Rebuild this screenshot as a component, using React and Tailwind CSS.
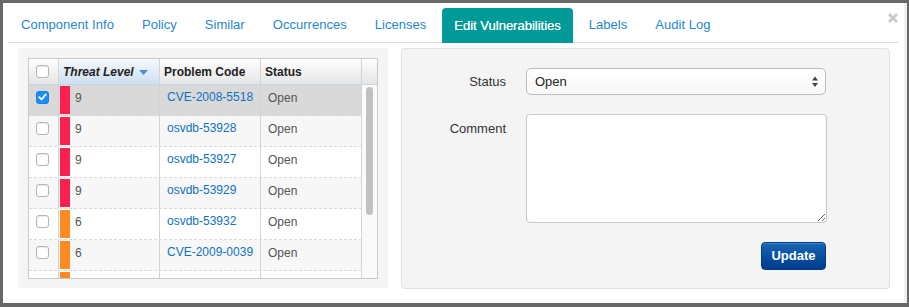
import React from "react";

const FONT = { fontFamily: '"Liberation Sans", Arial, Helvetica, sans-serif' };

const tabs = [
  "Component Info",
  "Policy",
  "Similar",
  "Occurrences",
  "Licenses",
  "Edit Vulnerabilities",
  "Labels",
  "Audit Log",
];

const rows = [
  { level: 9, code: "CVE-2008-5518", color: "bg-[#fd1f50]", selected: true },
  { level: 9, code: "osvdb-53928", color: "bg-[#fd1f50]" },
  { level: 9, code: "osvdb-53927", color: "bg-[#fd1f50]" },
  { level: 9, code: "osvdb-53929", color: "bg-[#fd1f50]" },
  { level: 6, code: "osvdb-53932", color: "bg-[#ff8a22]" },
  { level: 6, code: "CVE-2009-0039", color: "bg-[#ff8a22]" },
  { level: null, code: "", color: "bg-[#ff8a22]", hidden: true },
];

function Checkbox({ checked }) {
  if (checked) {
    return (
      <div className="w-[13px] h-[13px] rounded-[3px] bg-[#1a8ef8] border border-[#1580e6] flex items-center justify-center">
        <svg width="9" height="8" viewBox="0 0 9 8">
          <path d="M1.2 4.2 L3.5 6.4 L7.8 1.4" fill="none" stroke="#fff" strokeWidth="1.7" strokeLinecap="round" strokeLinejoin="round" />
        </svg>
      </div>
    );
  }
  return (
    <div className="w-[13px] h-[13px] rounded-[3px] bg-white border border-[#b4b4b4] shadow-[inset_0_1px_1px_rgba(0,0,0,0.08)]" />
  );
}

export default function App() {
  return (
    <div className="w-[909px] h-[307px] bg-[#686868] flex pt-[3px] pl-[3px] overflow-hidden" style={FONT}>
      <div className="w-[901px] h-[300px] bg-white flex flex-col">
        {/* Tabs */}
        <div className="mt-[5px] ml-[5px] mr-[6px] h-[35px] border-b border-[#dcdcdc] flex">
          <div className="flex pl-[1px] gap-[4px]">
            {tabs.map((t) =>
              t === "Edit Vulnerabilities" ? (
                <div
                  key={t}
                  className="h-[35px] px-[12px] flex items-center bg-[#009b98] rounded-t-[4px] text-white text-[13px] [text-shadow:0_0_0.4px_#fff]"
                >
                  {t}
                </div>
              ) : (
                <div key={t} className="h-[34px] px-[12px] flex items-center text-[#1f86d1] text-[13px] tracking-[0.03px]">
                  {t}
                </div>
              )
            )}
          </div>
          <div className="ml-auto mt-[5px]">
            <svg width="10" height="10" viewBox="0 0 10 10">
              <path d="M1 1 L9 9 M9 1 L1 9" stroke="#c9c9c9" strokeWidth="2.6" />
            </svg>
          </div>
        </div>

        {/* Body */}
        <div className="mt-[5px] pl-[15px] flex gap-[13px] items-start">
          {/* Left panel */}
          <div className="w-[370px] h-[240px] bg-[#f5f5f5] pt-[10px] pl-[10px]">
            <div className="w-[350px] h-[221px] border border-[#c9c9c9] bg-white flex flex-col text-[12px]">
              {/* header */}
              <div className="h-[26px] flex border-b border-[#c6d3e2] shrink-0">
                <div className="w-[30px] border-r border-[#d3d3d3] bg-gradient-to-b from-white to-[#e5e5e5] flex items-center pl-[7px] pb-[1px]">
                  <Checkbox />
                </div>
                <div className="w-[101px] border-r border-[#d3d3d3] bg-gradient-to-b from-[#f6f9fc] to-[#cddff1] flex items-center pl-[4px] font-bold italic text-[#222]">
                  Threat Level
                  <svg width="9" height="5" viewBox="0 0 9 5" className="ml-[5px] mt-[1px]">
                    <path d="M0 0 L9 0 L4.5 5 Z" fill="#4a90d6" />
                  </svg>
                </div>
                <div className="w-[101px] border-r border-[#d3d3d3] bg-gradient-to-b from-white to-[#e5e5e5] flex items-center pl-[4px] font-bold text-[#222]">
                  Problem Code
                </div>
                <div className="w-[101px] border-r border-[#d3d3d3] bg-gradient-to-b from-white to-[#e5e5e5] flex items-center pl-[4px] font-bold text-[#222]">
                  Status
                </div>
                <div className="flex-1 bg-gradient-to-b from-white to-[#e5e5e5]" />
              </div>
              {/* body */}
              <div className="flex-1 flex overflow-hidden">
                <div className="w-[333px] flex flex-col">
                  {rows.map((r, i) => (
                    <div
                      key={i}
                      className={`h-[31px] shrink-0 flex border-b border-dashed border-[#dadada] ${
                        r.selected ? "bg-[#d9d9d9]" : i % 2 === 1 ? "bg-[#f7f7f7]" : "bg-white"
                      }`}
                    >
                      <div className="w-[30px] border-r border-[#d3d3d3] flex items-center pl-[7px] pb-[6px]">
                        {!r.hidden && <Checkbox checked={r.selected} />}
                      </div>
                      <div className="w-[101px] border-r border-[#d3d3d3] flex">
                        <div className={`w-[10px] ml-[1px] my-[1px] ${r.color}`} />
                        {!r.hidden && (
                          <div className="flex items-center pl-[5px] pb-[4px] text-[#555]">{r.level}</div>
                        )}
                      </div>
                      <div className="w-[101px] border-r border-[#d3d3d3] flex items-center pl-[7px] pb-[6px] text-[#0e72c4]">
                        {r.code}
                      </div>
                      <div className="w-[101px] border-r border-[#d3d3d3] flex items-center pl-[7px] pb-[5px] text-[#555]">
                        {r.hidden ? "" : "Open"}
                      </div>
                    </div>
                  ))}
                </div>
                <div className="flex-1 bg-[#fafafa] pt-[2px] pl-[4px]">
                  <div className="w-[7px] h-[128px] rounded-full bg-[#c1c1c1]" />
                </div>
              </div>
            </div>
          </div>

          {/* Right panel */}
          <div className="w-[489px] h-[241px] bg-[#f4f4f4] border border-[#e1e1e1] rounded-[4px] pt-[19px] flex flex-col text-[13px] text-[#333]">
            <div className="flex items-center">
              <div className="w-[104px] text-right">Status</div>
              <div className="ml-[20px] w-[300px] h-[27px] rounded-[5px] border border-[#bdbdbd] bg-gradient-to-b from-white to-[#f7f7f7] flex items-center pl-[8px] pr-[7px] text-[#222]">
                <span>Open</span>
                <svg width="6" height="12" viewBox="0 0 6 12" className="ml-auto">
                  <path d="M0 4.5 L3 0.5 L6 4.5 Z M0 7 L3 11 L6 7 Z" fill="#444" />
                </svg>
              </div>
            </div>
            <div className="flex mt-[19px]">
              <div className="w-[104px] text-right pt-[5px]">Comment</div>
              <textarea className="ml-[20px] w-[301px] h-[109px] rounded-[4px] border border-[#c8c8c8] bg-white outline-none resize" />
            </div>
            <div className="flex justify-end mt-[19px] pr-[63px]">
              <button className="w-[65px] h-[28px] rounded-[4px] border border-[#003a86] bg-gradient-to-b from-[#1766b4] to-[#003b8d] text-white font-bold text-[13px] shadow-[inset_0_1px_0_rgba(255,255,255,0.2)]">
                Update
              </button>
            </div>
          </div>
        </div>
      </div>
      <div className="w-[3px] h-[300px] bg-[#f0f0f0]" />
    </div>
  );
}
